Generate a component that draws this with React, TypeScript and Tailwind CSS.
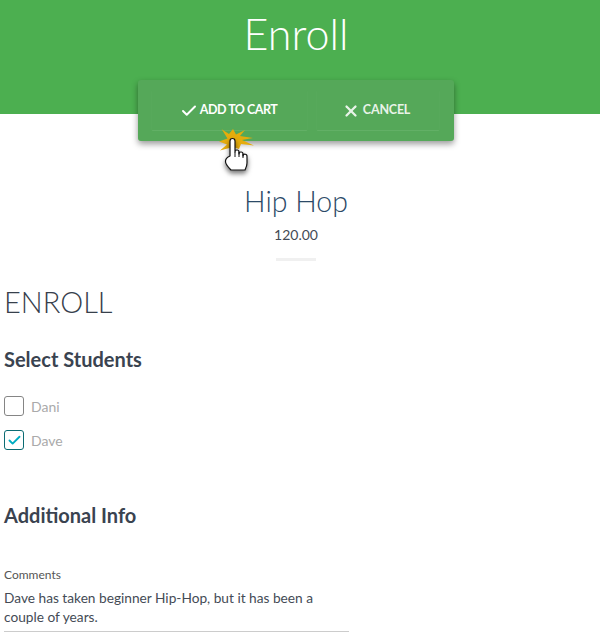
import React from "react";
import { Check, X } from "lucide-react";

const font = { fontFamily: '"Lato", sans-serif' };

const ClickCursor: React.FC = () => (
    <svg className="absolute left-[81px] top-[45px]" width="40" height="56" viewBox="0 0 40 56" aria-hidden="true">
        <polygon fill="#e5ac0c" points="2.7,4.3 10,9 14,4 17,9.5 26,5 21,11 34,13 23,15 35,20.5 22,19 20,24 14,22 1,25.5 8,19.5 0,16.5 8.5,13.5" />
        <defs>
            <filter id="cursorShadow" x="-40%" y="-30%" width="180%" height="170%">
                <feDropShadow dx="0" dy="3" stdDeviation="2.5" floodColor="#000" floodOpacity="0.55" />
            </filter>
        </defs>
        <path
            filter="url(#cursorShadow)"
            fill="#fff"
            stroke="#111"
            strokeWidth="1.2"
            strokeLinejoin="round"
            d="M11 31 V16 a2.5 2.5 0 0 1 5 0 V27 a2 2 0 0 1 4 0 V29 a2 2 0 0 1 4 0 V31 a2 2 0 0 1 4 .5 V38 c0 3 -1 5 -2 7 H12 c-2 -2 -5 -5 -5.5 -8 c-.3 -3 2 -5 4.5 -6 Z"
        />
        <path stroke="#111" strokeWidth="1" fill="none" d="M16 27 V32 M20 27 V32 M24 29 V33" />
    </svg>
);

const StudentRow: React.FC<{ name: string; checked?: boolean }> = ({ name, checked }) => (
    <label className="flex items-center h-[20px] gap-[7px]">
        <span className={`flex items-center justify-center w-[20px] h-[20px] rounded-[3px] border ${checked ? "border-[#0b6b73]" : "border-[#858585]"}`}>
            {checked && <Check size={15} strokeWidth={3} className="text-[#00acc1]" />}
        </span>
        <span className="text-[14px] text-[#aaaaaa]">{name}</span>
    </label>
);

const App: React.FC = () => {
    return (
        <div className="w-[600px] h-[637px] overflow-hidden bg-white text-[#37404c]" style={font}>
            <div className="w-[592px]">
                <header className="h-[114px] bg-[#4caf50] w-[600px] pr-[8px] flex justify-center">
                    <h1 className="mt-[9px] h-[50px] text-[43px] leading-[50px] font-light text-white">Enroll</h1>
                </header>

                <div className="relative ml-[138px] -mt-[34px] w-[316px] h-[61px] rounded-[3px] bg-[#55a859] shadow-[0_3px_6px_rgba(0,0,0,0.4)] flex pl-[13px] gap-[8px]">
                    <button className="w-[157px] h-[41px] mt-[10px] pr-[2px] flex items-center justify-center gap-[2px] border border-[#57a95b] border-t-transparent border-b-[#62b066] rounded-[2px] text-[12.5px] font-bold tracking-[-0.5px] text-white">
                        <Check size={18} strokeWidth={2.6} />
                        ADD TO CART
                    </button>
                    <button className="w-[124px] h-[41px] mt-[10px] pr-[4px] flex items-center justify-center gap-[3px] border border-[#57a95b] border-t-transparent border-b-[#62b066] rounded-[2px] text-[12.5px] font-bold tracking-[-0.2px] text-[#e8f3e8]">
                        <X size={18} strokeWidth={3} />
                        CANCEL
                    </button>
                    <ClickCursor />
                </div>

                <section className="flex flex-col items-center">
                    <h2 className="mt-[42px] h-[36px] text-[28.5px] leading-[36px] font-light text-[#2c4a68]">Hip Hop</h2>
                    <p className="mt-[7px] h-[18px] text-[14px] leading-[18px] text-[#444b55]">120.00</p>
                    <div className="mt-[14px] w-[40px] h-[3px] bg-[#f0f0f0]" />
                </section>

                <h2 className="mt-[23px] ml-[4px] h-[36px] text-[29px] leading-[36px] font-light text-[#37404c]">ENROLL</h2>

                <h3 className="mt-[26px] ml-[4px] h-[26px] text-[20px] leading-[26px] font-bold text-[#3a4350]">Select Students</h3>

                <div className="mt-[24px] ml-[4px] flex flex-col gap-[14px]">
                    <StudentRow name="Dani" />
                    <StudentRow name="Dave" checked />
                </div>

                <h3 className="mt-[52px] ml-[4px] h-[26px] text-[20px] leading-[26px] font-bold text-[#3a4350]">Additional Info</h3>

                <div className="mt-[39px] ml-[4px] w-[345px] border-b border-[#cccccc] pb-[5px]">
                    <label className="block h-[16px] text-[12px] leading-[16px] text-[#555555]">Comments</label>
                    <p className="mt-[5px] text-[13.7px] leading-[19px] text-[#444b55]">
                        Dave has taken beginner Hip-Hop, but it has been a couple of years.
                    </p>
                </div>
            </div>
        </div>
    );
};

export default App;
